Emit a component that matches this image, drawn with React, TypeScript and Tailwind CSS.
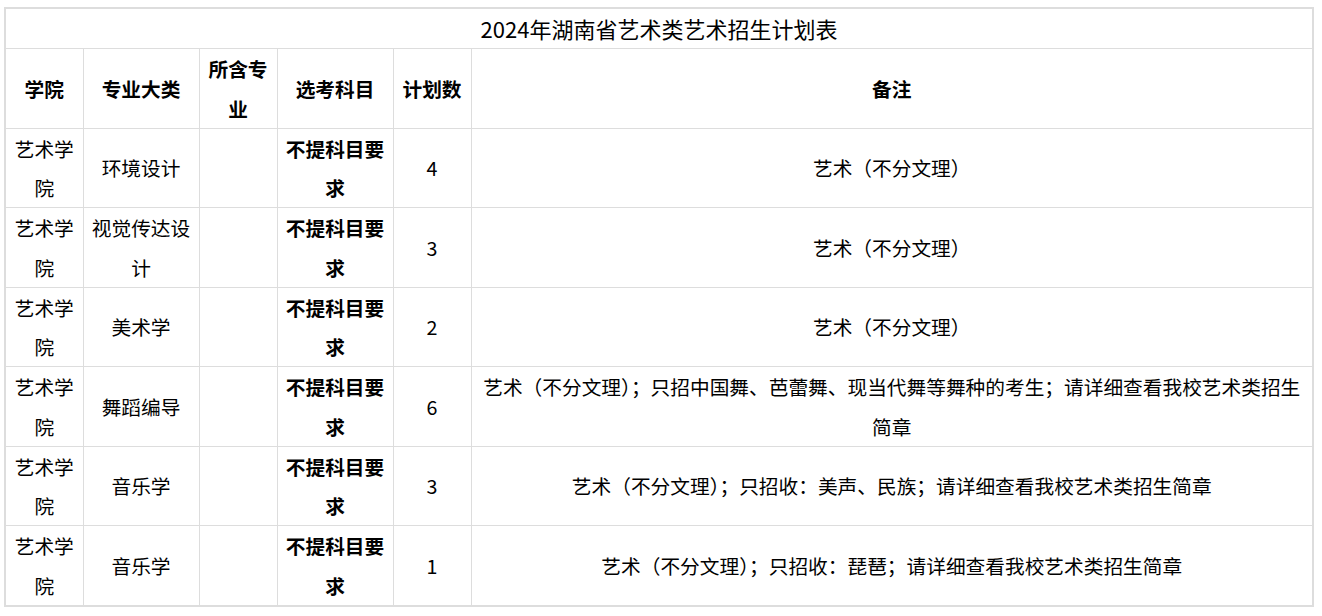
const rows = [
  { college: '艺术学院', major: '环境设计', plan: '4', note: '艺术（不分文理）' },
  { college: '艺术学院', major: '视觉传达设计', plan: '3', note: '艺术（不分文理）' },
  { college: '艺术学院', major: '美术学', plan: '2', note: '艺术（不分文理）' },
  {
    college: '艺术学院',
    major: '舞蹈编导',
    plan: '6',
    note: '艺术（不分文理）；只招中国舞、芭蕾舞、现当代舞等舞种的考生；请详细查看我校艺术类招生简章',
  },
  { college: '艺术学院', major: '音乐学', plan: '3', note: '艺术（不分文理）；只招收：美声、民族；请详细查看我校艺术类招生简章' },
  { college: '艺术学院', major: '音乐学', plan: '1', note: '艺术（不分文理）；只招收：琵琶；请详细查看我校艺术类招生简章' },
];

const cell = 'border border-[#dddddd] text-center align-middle px-[1px] leading-[39.25px] break-all';

export default function App() {
  return (
    <div
      className="min-h-screen bg-white pl-[4px] pt-[7px] text-[19.7px] text-black"
      style={{ fontFamily: '"Noto Sans CJK SC", "Microsoft YaHei", sans-serif' }}
    >
      <table className="w-[1310px] table-fixed border-collapse border-2 border-[#dddddd]">
        <colgroup>
          <col className="w-[78px]" />
          <col className="w-[116px]" />
          <col className="w-[78px]" />
          <col className="w-[116px]" />
          <col className="w-[78px]" />
          <col />
        </colgroup>
        <tbody>
          <tr>
            <td colSpan={6} className={`${cell} text-[22px] leading-[38px]`}>
              2024年湖南省艺术类艺术招生计划表
            </td>
          </tr>
          <tr className="font-bold">
            <td className={cell}>学院</td>
            <td className={cell}>专业大类</td>
            <td className={cell}>所含专业</td>
            <td className={cell}>选考科目</td>
            <td className={cell}>计划数</td>
            <td className={cell}>备注</td>
          </tr>
          {rows.map((r, i) => (
            <tr key={i}>
              <td className={cell}>{r.college}</td>
              <td className={cell}>{r.major}</td>
              <td className={cell}></td>
              <td className={`${cell} font-bold`}>不提科目要求</td>
              <td className={cell}>{r.plan}</td>
              <td className={`${cell} px-[5px]`}>{r.note}</td>
            </tr>
          ))}
        </tbody>
      </table>
    </div>
  );
}
